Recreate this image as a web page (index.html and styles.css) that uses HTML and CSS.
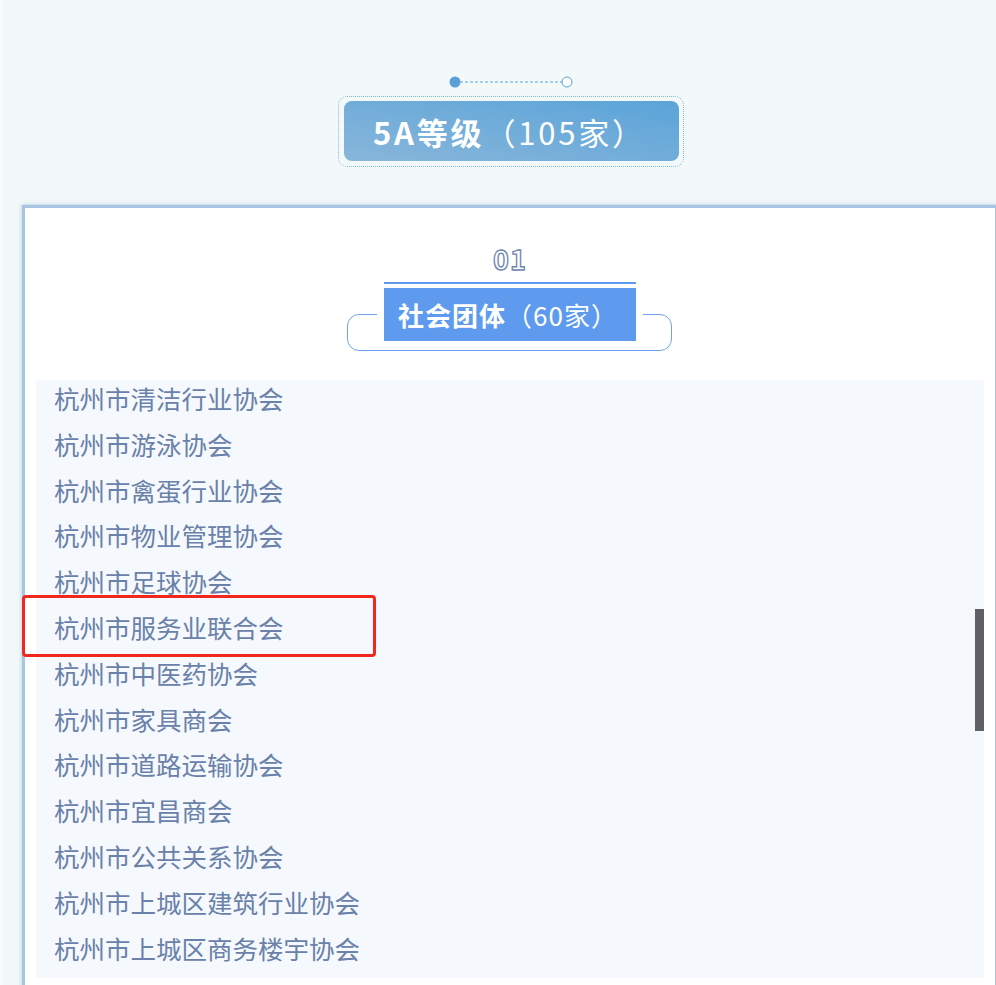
FILE: index.html
```html
<!DOCTYPE html>
<html lang="zh-CN">
<head>
<meta charset="utf-8">
<title>5A等级</title>
<link rel="stylesheet" href="styles.css">
</head>
<body>
<div class="page">
  <div class="level-head">
    <svg class="connector" width="124" height="12" viewBox="0 0 124 12">
      <line x1="11" y1="6" x2="113" y2="6" stroke="#5aa0d8" stroke-width="1" stroke-dasharray="3 2"/>
      <circle cx="6" cy="6" r="5.5" fill="#5b9fd6"/>
      <circle cx="118" cy="6" r="5" fill="#fff" stroke="#5aa0d8" stroke-width="1"/>
    </svg>
    <div class="level-frame">
      <div class="level-badge"><span class="strong">5A等级</span><span class="light">（105家）</span></div>
    </div>
  </div>

  <div class="panel">
    <div class="group-head">
      <div class="group-no">01</div>
      <div class="group-title-wrap">
        <div class="group-title">
          <div class="group-title-text"><span class="strong">社会团体</span><span class="light">（60家）</span></div>
        </div>
      </div>
    </div>

    <div class="list-box">
      <ul class="org-list">
        <li>杭州市清洁行业协会</li>
        <li>杭州市游泳协会</li>
        <li>杭州市禽蛋行业协会</li>
        <li>杭州市物业管理协会</li>
        <li>杭州市足球协会</li>
        <li>杭州市服务业联合会</li>
        <li>杭州市中医药协会</li>
        <li>杭州市家具商会</li>
        <li>杭州市道路运输协会</li>
        <li>杭州市宜昌商会</li>
        <li>杭州市公共关系协会</li>
        <li>杭州市上城区建筑行业协会</li>
        <li>杭州市上城区商务楼宇协会</li>
      </ul>
      <div class="scrollbar"></div>
    </div>

    <div class="highlight"></div>
  </div>
</div>
</body>
</html>
```

FILE: styles.css
```css
html, body {
  margin: 0;
  padding: 0;
}

body {
  background: #f3f8f8;
  overflow: hidden;
  font-family: "Noto Sans CJK SC", "Microsoft YaHei", sans-serif;
}

.page {
  width: 1020px;
  box-sizing: border-box;
  border-left: 2px solid #fbfdfd;
}

.strong {
  font-weight: bold;
}

.light {
  font-weight: normal;
}

.level-head {
  display: flex;
  flex-direction: column;
  align-items: center;
  padding-top: 76px;
}

.connector {
  display: block;
}

.level-frame {
  margin-top: 8px;
  border: 1px dotted #7db6e2;
  border-radius: 9px;
  padding: 4px 4px 5px 5px;
}

.level-badge {
  width: 335px;
  height: 60px;
  box-sizing: border-box;
  padding-left: 29px;
  border-radius: 8px;
  background: linear-gradient(to top right, #88b6da, #5ba4d9);
  display: flex;
  align-items: center;
  color: #fff;
  font-size: 31px;
  letter-spacing: 2.8px;
  white-space: nowrap;
}

.panel {
  position: relative;
  margin-top: 38px;
  margin-left: 20px;
  width: 976px;
  height: 820px;
  box-sizing: border-box;
  background: #fff;
  border: 3px solid #a8c6e3;
  box-shadow: 0 0 4px rgba(110, 160, 210, 0.55);
}

.group-head {
  display: flex;
  flex-direction: column;
  align-items: center;
  padding-top: 36px;
}

.group-no {
  font-size: 27px;
  line-height: 30px;
  font-weight: bold;
  color: #fff;
  -webkit-text-stroke: 1.3px #6c86b0;
  letter-spacing: 1px;
}

.group-title-wrap {
  position: relative;
  isolation: isolate;
  margin-top: 8px;
}

.group-title-wrap::before {
  content: "";
  position: absolute;
  left: -37px;
  right: -36px;
  top: 32px;
  height: 35px;
  border: 1px solid #6ea3ee;
  border-radius: 12px;
  z-index: -1;
}

.group-title {
  width: 252px;
  border-top: 2px solid #5e9bef;
  padding-top: 4px;
  background: #fff;
  box-shadow: 7px 0 0 #fff, -7px 0 0 #fff;
}

.group-title-text {
  height: 53px;
  box-sizing: border-box;
  padding-left: 14px;
  background: #5e9bef;
  display: flex;
  align-items: center;
  color: #fff;
  font-size: 26px;
  letter-spacing: 1px;
  white-space: nowrap;
}

.list-box {
  position: relative;
  margin: 39px 11px 0;
  height: 598px;
  background: #f5f9fd;
  overflow: hidden;
}

.org-list {
  list-style: none;
  margin: -5px 0 0;
  padding: 0 0 0 18px;
}

.org-list li {
  font-size: 25.5px;
  line-height: 45.8px;
  color: #6a81a9;
  white-space: nowrap;
}

.scrollbar {
  position: absolute;
  right: 0;
  top: 229px;
  width: 9px;
  height: 122px;
  background: #5f6166;
}

.highlight {
  position: absolute;
  left: -3px;
  top: 387px;
  width: 354px;
  height: 62px;
  box-sizing: border-box;
  border: 3px solid #f2281e;
  border-radius: 4px;
}
```
